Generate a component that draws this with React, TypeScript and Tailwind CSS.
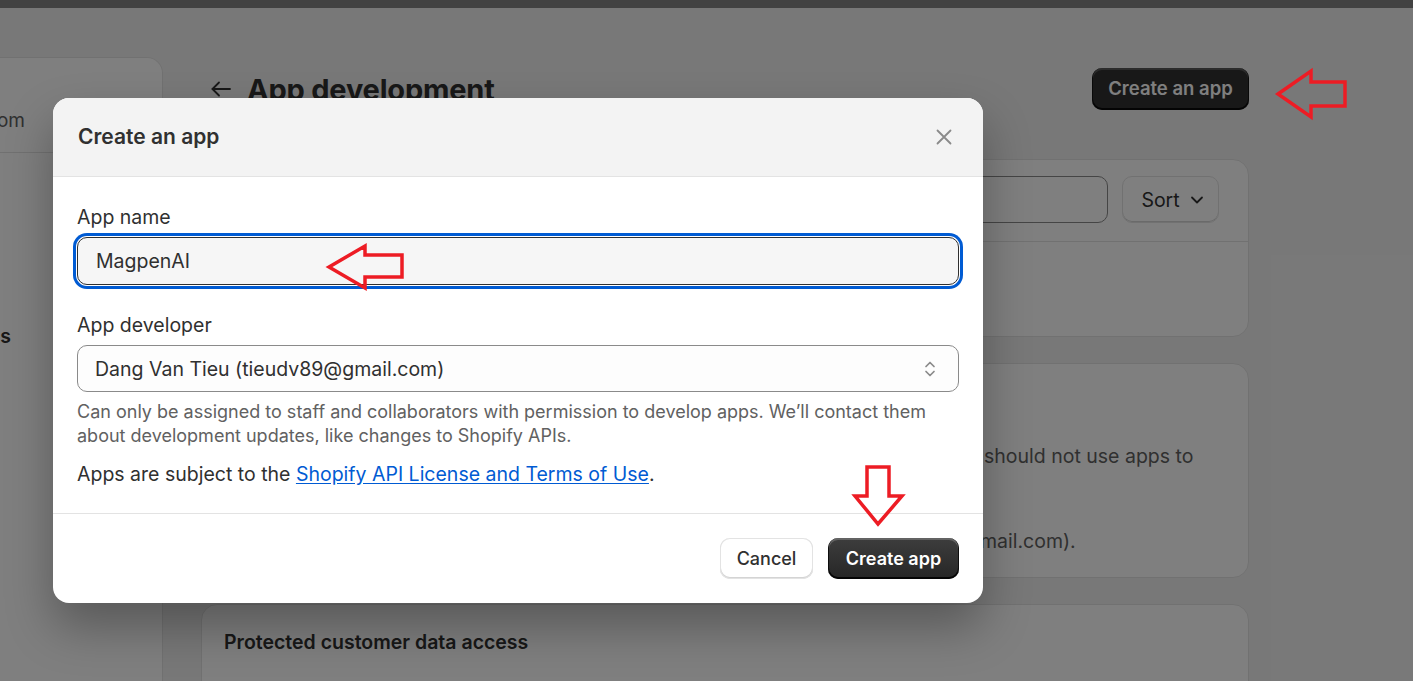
import React from "react";

function BackArrow() {
  return (
    <svg width="22" height="20" viewBox="0 0 22 20" fill="none" stroke="#303030" strokeWidth="1.8" strokeLinecap="round" strokeLinejoin="round">
      <path d="M20 10H2.5" />
      <path d="M9 3.5 2.5 10 9 16.5" />
    </svg>
  );
}

function UpDown() {
  return (
    <svg width="12" height="18" viewBox="0 0 12 18" fill="none" stroke="#8a8a8a" strokeWidth="1.7" strokeLinecap="round" strokeLinejoin="round">
      <path d="M2 6.5 6 2.5l4 4" />
      <path d="M2 11.5l4 4 4-4" />
    </svg>
  );
}

function CloseX() {
  return (
    <svg width="16" height="16" viewBox="0 0 16 16" fill="none" stroke="#8a8a8a" strokeWidth="1.8" strokeLinecap="round">
      <path d="M1.5 1.5l13 13M14.5 1.5l-13 13" />
    </svg>
  );
}

function ChevronDown() {
  return (
    <svg width="14" height="10" viewBox="0 0 14 10" fill="none" stroke="#303030" strokeWidth="1.8" strokeLinecap="round" strokeLinejoin="round">
      <path d="M2 2.5l5 5 5-5" />
    </svg>
  );
}

export default function App() {
  return (
    <div className="relative h-[681px] w-[1413px] overflow-hidden bg-[#f1f1f1] font-['Inter','Noto_Sans',sans-serif] text-[#303030]">
      <div className="relative z-30 h-2 bg-[#424242]" />

      <div className="flex gap-[38px] pt-[49px]">
        {/* sidebar */}
        <aside className="h-[640px] w-[163px] shrink-0 overflow-hidden rounded-tr-[16px] border-y border-r border-[#e3e3e3] bg-white">
          <div className="flex h-[94px] items-end justify-end pb-[19px] pr-[137px]">
            <span className="whitespace-nowrap text-[19px] leading-6 text-[#616161]">tieudv-store.myshopify.com</span>
          </div>
          <div className="border-t border-[#e3e3e3]" />
          <div className="mt-[171px] flex justify-end pr-[151px]">
            <span className="whitespace-nowrap text-[19.5px] font-semibold leading-6 text-[#303030]">Sales channels  s</span>
          </div>
        </aside>

        {/* main */}
        <main className="w-[1048px] shrink-0">
          <div className="mt-[11px] flex h-[42px] items-center justify-between">
            <div className="flex items-center gap-[15px] pl-[9px]">
              <BackArrow />
              <h1 className="text-[29px] font-bold leading-none tracking-[-0.2px] text-[#303030]">App development</h1>
            </div>
            <button className="h-[42px] w-[157px] rounded-[10px] bg-[#303030] text-[18.5px] font-semibold text-white shadow-[inset_0_-1px_0_1px_rgba(0,0,0,0.8),inset_0_1px_0_1px_rgba(255,255,255,0.2)]">
              Create an app
            </button>
          </div>

          <section className="mt-[49px] h-[178px] rounded-[16px] border border-[#e3e3e3] bg-white">
            <div className="flex items-center gap-[14px] border-b border-[#e3e3e3] pb-[18px] pl-[22px] pr-[29px] pt-4">
              <div className="h-[47px] flex-1 rounded-[10px] border border-[#8a8a8a] bg-white" />
              <div className="flex h-[47px] w-[97px] items-center justify-center gap-[10px] rounded-[10px] border border-[#e3e3e3] bg-white pl-1 text-[19.5px] leading-6 shadow-[inset_0_-1px_0_#d4d4d4]">
                <span>Sort</span>
                <ChevronDown />
              </div>
            </div>
          </section>

          <section className="mt-[26px] h-[215px] rounded-[16px] border border-[#e3e3e3] bg-white px-[22px] pt-6">
            <h2 className="text-[19.5px] font-semibold leading-6">Custom app development</h2>
            <div className="mt-8 whitespace-nowrap text-[19.5px] leading-6 text-[#616161]">
              <div className="flex">
                <span className="w-[760px] shrink-0 overflow-hidden">Custom apps are built exclusively for your store. Developers</span>
                <span>should not use apps to</span>
              </div>
              <div>collect or share data beyond what is needed.</div>
              <div className="mt-[37px] flex">
                <span className="w-[756px] shrink-0 overflow-hidden">Contact the app developer (tieudv89@g</span>
                <span>mail.com).</span>
              </div>
            </div>
          </section>

          <section className="mt-[26px] h-[120px] rounded-[16px] border border-[#e3e3e3] bg-white px-[22px] pt-[25px]">
            <h2 className="text-[19.5px] font-semibold leading-6">Protected customer data access</h2>
          </section>
        </main>
      </div>

      {/* backdrop */}
      <div className="absolute inset-x-0 bottom-0 top-2 z-10 bg-black/50" />

      {/* modal */}
      <div className="absolute left-[53px] top-[98px] z-20 w-[930px] overflow-hidden rounded-[16px] bg-white shadow-[0_24px_48px_rgba(0,0,0,0.3)]">
        <div className="flex h-[79px] items-center justify-between border-b border-[#e3e3e3] bg-[#f3f3f3] pl-[25px] pr-[31px]">
          <h2 className="text-[21px] font-semibold text-[#303030]">Create an app</h2>
          <CloseX />
        </div>

        <div className="px-6 pb-[27px] pt-[28px] text-[19.5px] leading-6">
          <label className="block text-[#303030]">App name</label>
          <div className="mt-2 flex h-[48px] items-center rounded-[10px] border border-[#303030] bg-[#f6f6f6] pl-[18px] shadow-[0_0_0_1px_#ffffff,0_0_0_4px_#005bd3]">
            <span className="text-[19.5px] text-[#303030]">MagpenAI</span>
          </div>

          <label className="mt-7 block text-[#303030]">App developer</label>
          <div className="mt-2 flex h-[47px] items-center justify-between rounded-[10px] border border-[#8a8a8a] bg-[#fdfdfd] pl-[17px] pr-[22px]">
            <span className="text-[19.5px] text-[#303030]">Dang Van Tieu (tieudv89@gmail.com)</span>
            <UpDown />
          </div>
          <p className="mt-[8px] text-[18px] text-[#616161]">
            Can only be assigned to staff and collaborators with permission to develop apps. We’ll contact them about development updates, like changes to Shopify APIs.
          </p>
          <p className="mt-[14px] text-[#303030]">
            Apps are subject to the{" "}
            <a className="text-[#005bd3] underline underline-offset-2">Shopify API License and Terms of Use</a>.
          </p>
        </div>

        <div className="flex h-[90px] items-center justify-end gap-[15px] border-t border-[#e3e3e3] px-6">
          <button className="h-[41px] w-[93px] rounded-[10px] bg-white text-[18px] font-medium text-[#303030] shadow-[inset_0_0_0_1px_#e3e3e3,inset_0_-1px_0_1px_#d4d4d4]">
            Cancel
          </button>
          <button className="h-[41px] w-[131px] rounded-[10px] bg-[linear-gradient(#3d3d3d,#262626)] text-[18px] font-semibold text-white shadow-[inset_0_-1px_0_1px_rgba(0,0,0,0.85),inset_0_1px_0_1px_rgba(255,255,255,0.2)]">
            Create app
          </button>
        </div>
      </div>

      {/* annotation arrows */}
      <svg className="pointer-events-none absolute inset-0 z-40" width="1413" height="681" viewBox="0 0 1413 681" fill="none" stroke="#ed1c24" strokeWidth="3.5" strokeLinejoin="miter">
        <polygon points="1278,94 1311,71 1311,82 1345,82 1345,106 1311,106 1311,117" />
        <polygon points="329,267 365,246 365,255 402,255 402,277 365,277 365,288" />
        <polygon points="867,467 889,467 889,496 902,496 878,524 855,496 867,496" />
      </svg>
    </div>
  );
}
